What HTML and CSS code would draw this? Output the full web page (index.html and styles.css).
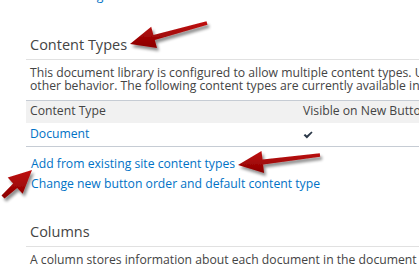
FILE: index.html
```html
<!DOCTYPE html>
<html>
<head>
<meta charset="utf-8">
<link rel="stylesheet" href="styles.css">
</head>
<body>
<div class="page">
  <a class="top-link" href="#">Form Settings</a>

  <section class="sect">
    <h2 class="sect-title">Content Types</h2>
    <p class="desc">
      <span class="line">This document library is configured to allow multiple content types. Use content types to specify the information you want to display about an item, in addition to its policies, workflows, or</span>
      <span class="line">other behavior. The following content types are currently available in this library:</span>
    </p>
    <table class="ct-table">
      <thead>
        <tr><th class="c1">Content Type</th><th class="c2">Visible on New Button</th><th class="c3">Default Content Type</th></tr>
      </thead>
      <tbody>
        <tr>
          <td class="c1"><a href="#">Document</a></td>
          <td class="c2"><svg class="check" width="10" height="8" viewBox="0 0 10 8"><path d="M0.6 4.3 L2.2 2.9 L3.9 4.6 L8.4 0.4 L9.6 1.6 L3.9 7.4 Z" fill="#2b3848"/></svg></td>
          <td class="c3"></td>
        </tr>
      </tbody>
    </table>
    <div class="actions">
      <a href="#">Add from existing site content types</a>
      <a href="#">Change new button order and default content type</a>
    </div>
  </section>

  <section class="sect sect-cols">
    <h2 class="sect-title">Columns</h2>
    <p class="desc">
      <span class="line">A column stores information about each document in the document library. The following columns are currently available in this document library:</span>
    </p>
  </section>
</div>

<svg class="arrows" width="419" height="267" viewBox="0 0 419 267">
  <defs>
    <filter id="sh" x="-20%" y="-50%" width="140%" height="200%">
      <feGaussianBlur in="SourceAlpha" stdDeviation="1.6"/>
      <feOffset dx="2" dy="3" result="b"/>
      <feComponentTransfer><feFuncA type="linear" slope="0.45"/></feComponentTransfer>
      <feMerge><feMergeNode/><feMergeNode in="SourceGraphic"/></feMerge>
    </filter>
    <linearGradient id="rg" x1="0" y1="0" x2="0" y2="1">
      <stop offset="0" stop-color="#c01010"/>
      <stop offset="1" stop-color="#8a0000"/>
    </linearGradient>
  </defs>
  <g filter="url(#sh)" fill="url(#rg)">
    <polygon points="206.5,21.3 153.4,34.9 151.2,26.8 130,44 157.0,48.0 154.8,39.9 207.5,24.7"/>
    <polygon points="319.8,153.2 262.5,159.4 261.5,151.1 238,165 264.1,172.9 263.1,164.6 320.2,156.8"/>
    <polygon points="1.5,195.4 13.2,183.5 7.7,177.6 32,170 22.7,193.8 17.2,187.9 4.5,198.6"/>
  </g>
</svg>
</body>
</html>
```
FILE: styles.css
```css
html, body {
  margin: 0;
  padding: 0;
  background: #ffffff;
  overflow: hidden;
}
body {
  width: 419px;
  height: 267px;
  position: relative;
  font-family: "Open Sans", "Noto Sans", sans-serif;
  font-size: 12.2px;
  color: #444444;
}
a {
  color: #0072c6;
  text-decoration: none;
}
.page {
  width: 1100px;
  padding-left: 26px;
}
.top-link {
  display: block;
  margin-top: -12px;
  padding-left: 5px;
  line-height: 16px;
}
.sect-title {
  margin: 31px 0 0 0;
  padding: 0 0 4px 4px;
  font-size: 14.5px;
  font-weight: normal;
  line-height: 20px;
  color: #444444;
  border-bottom: 1px solid #e1e1e1;
}
.desc {
  margin: 6px 0 0 0;
  padding-left: 4px;
  line-height: 13px;
}
.desc .line {
  display: block;
  white-space: nowrap;
}
.ct-table {
  margin-top: 8px;
  border-collapse: collapse;
  width: 900px;
}
.ct-table th {
  font-weight: normal;
  text-align: left;
  background: #f1f1f1;
  border-top: 1px solid #c6ccd4;
  padding: 2px 4px 4px 4px;
  line-height: 16px;
  white-space: nowrap;
}
.ct-table td {
  padding: 3px 4px 4px 4px;
  line-height: 16px;
  border-bottom: 1px solid #c6ccd4;
  white-space: nowrap;
}
.ct-table .c1 { width: 265px; }
.ct-table .c2 { width: 200px; }
.check {
  display: inline-block;
  vertical-align: -1px;
}
.actions {
  display: flex;
  flex-direction: column;
  align-items: flex-start;
  gap: 4px;
  margin-top: 9px;
  padding-left: 5px;
}
.actions a {
  line-height: 16px;
}
.sect-cols .sect-title {
  margin-top: 30px;
}
.arrows {
  position: absolute;
  left: 0;
  top: 0;
  pointer-events: none;
}
```
